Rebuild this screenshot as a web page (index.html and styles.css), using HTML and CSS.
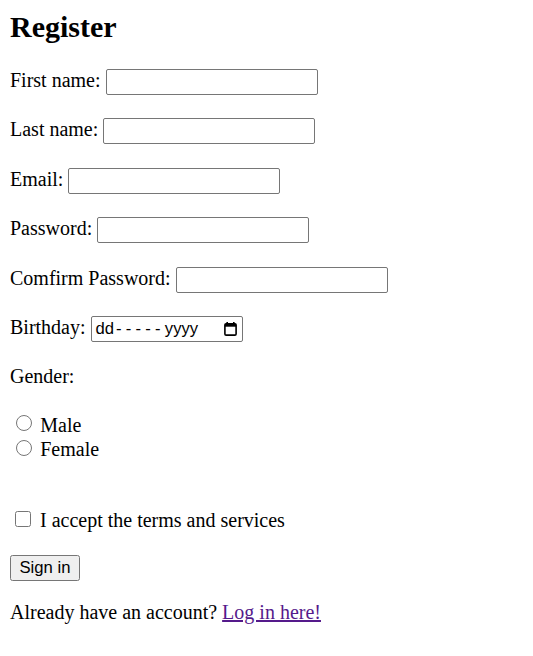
FILE: index.html
```html
<!DOCTYPE html>
<html lang="en">
<head>
<meta charset="utf-8">
<title>Register</title>
<link rel="stylesheet" href="styles.css">
</head>
<body class="page">
<h2 class="title">Register</h2>
<form class="form">
  <div class="row"><label for="fn">First name:</label> <input class="field" id="fn" type="text"></div>
  <div class="row"><label for="ln">Last name:</label> <input class="field" id="ln" type="text"></div>
  <div class="row"><label for="em">Email:</label> <input class="field" id="em" type="email"></div>
  <div class="row"><label for="pw">Password:</label> <input class="field" id="pw" type="password"></div>
  <div class="row"><label for="cpw">Comfirm Password:</label> <input class="field" id="cpw" type="password"></div>
  <div class="row"><label>Birthday:</label> <span class="date" role="textbox"><span class="date-text">dd<span class="dashes">-----</span>yyyy</span><svg class="cal" width="13" height="14" viewBox="0 0 13 14"><rect x="0.9" y="1.9" width="11.2" height="11.2" rx="1.2" fill="none" stroke="#000" stroke-width="1.6"/><rect x="0.9" y="1.9" width="11.2" height="2.8" fill="#000"/><rect x="2.4" y="0" width="1.6" height="2.5" fill="#000"/><rect x="9" y="0" width="1.6" height="2.5" fill="#000"/></svg></span></div>
  <div class="row text-row">Gender:</div>
  <div class="radios">
    <div class="opt"><input class="radio" type="radio" name="g" id="m"> <label for="m">Male</label></div>
    <div class="opt"><input class="radio" type="radio" name="g" id="f"> <label for="f">Female</label></div>
  </div>
  <div class="terms"><input class="check" type="checkbox" id="t"> <label for="t">I accept the terms and services</label></div>
  <div class="actions"><button class="btn" type="button">Sign in</button></div>
  <p class="login">Already have an account? <a class="link" href="#">Log in here!</a></p>
</form>
</body>
</html>
```

FILE: styles.css
```css
.page {
  margin: 10px;
  font-family: "Liberation Serif", "Times New Roman", serif;
  font-size: 20px;
  color: #000;
  background: #fff;
}
.title {
  margin: 0 0 25px;
  font-size: 30px;
  font-weight: bold;
}
.form { margin: 0; }
.row { margin: 0 0 23.4px; }
.field {
  box-sizing: border-box;
  width: 212px;
  height: 26px;
  margin: 0;
  padding: 1px 3px;
  border: 1px solid #767676;
  border-radius: 2px;
  font-family: "Liberation Sans", Arial, sans-serif;
  font-size: 16.67px;
  background: #fff;
}
.date {
  box-sizing: border-box;
  display: inline-flex;
  align-items: center;
  justify-content: space-between;
  width: 152px;
  height: 26px;
  padding: 0 5px 0 4px;
  border: 1px solid #767676;
  border-radius: 2px;
  font-family: "Liberation Sans", Arial, sans-serif;
  font-size: 16.67px;
}
.dashes { letter-spacing: 4.2px; margin-left: 2px; }
.cal { display: block; }
.text-row { line-height: normal; }
.radios { margin: 0 0 46px; }
.radio {
  width: 16px;
  height: 16px;
  margin: 3.75px 3px 0 6.25px;
}
.check {
  width: 16px;
  height: 16px;
  margin: 3.75px 4px 3.75px 5px;
}
.terms { margin: 0 0 23px; }
.btn {
  box-sizing: border-box;
  height: 26px;
  margin: 0;
  padding: 0 8.5px;
  border: 1px solid #767676;
  border-radius: 2.5px;
  background: #efefef;
  font-family: "Liberation Sans", Arial, sans-serif;
  font-size: 16.67px;
  color: #000;
}
.actions { margin: 0; }
.login { margin: 20px 0 0; }
.link { color: #551a8b; }
```
